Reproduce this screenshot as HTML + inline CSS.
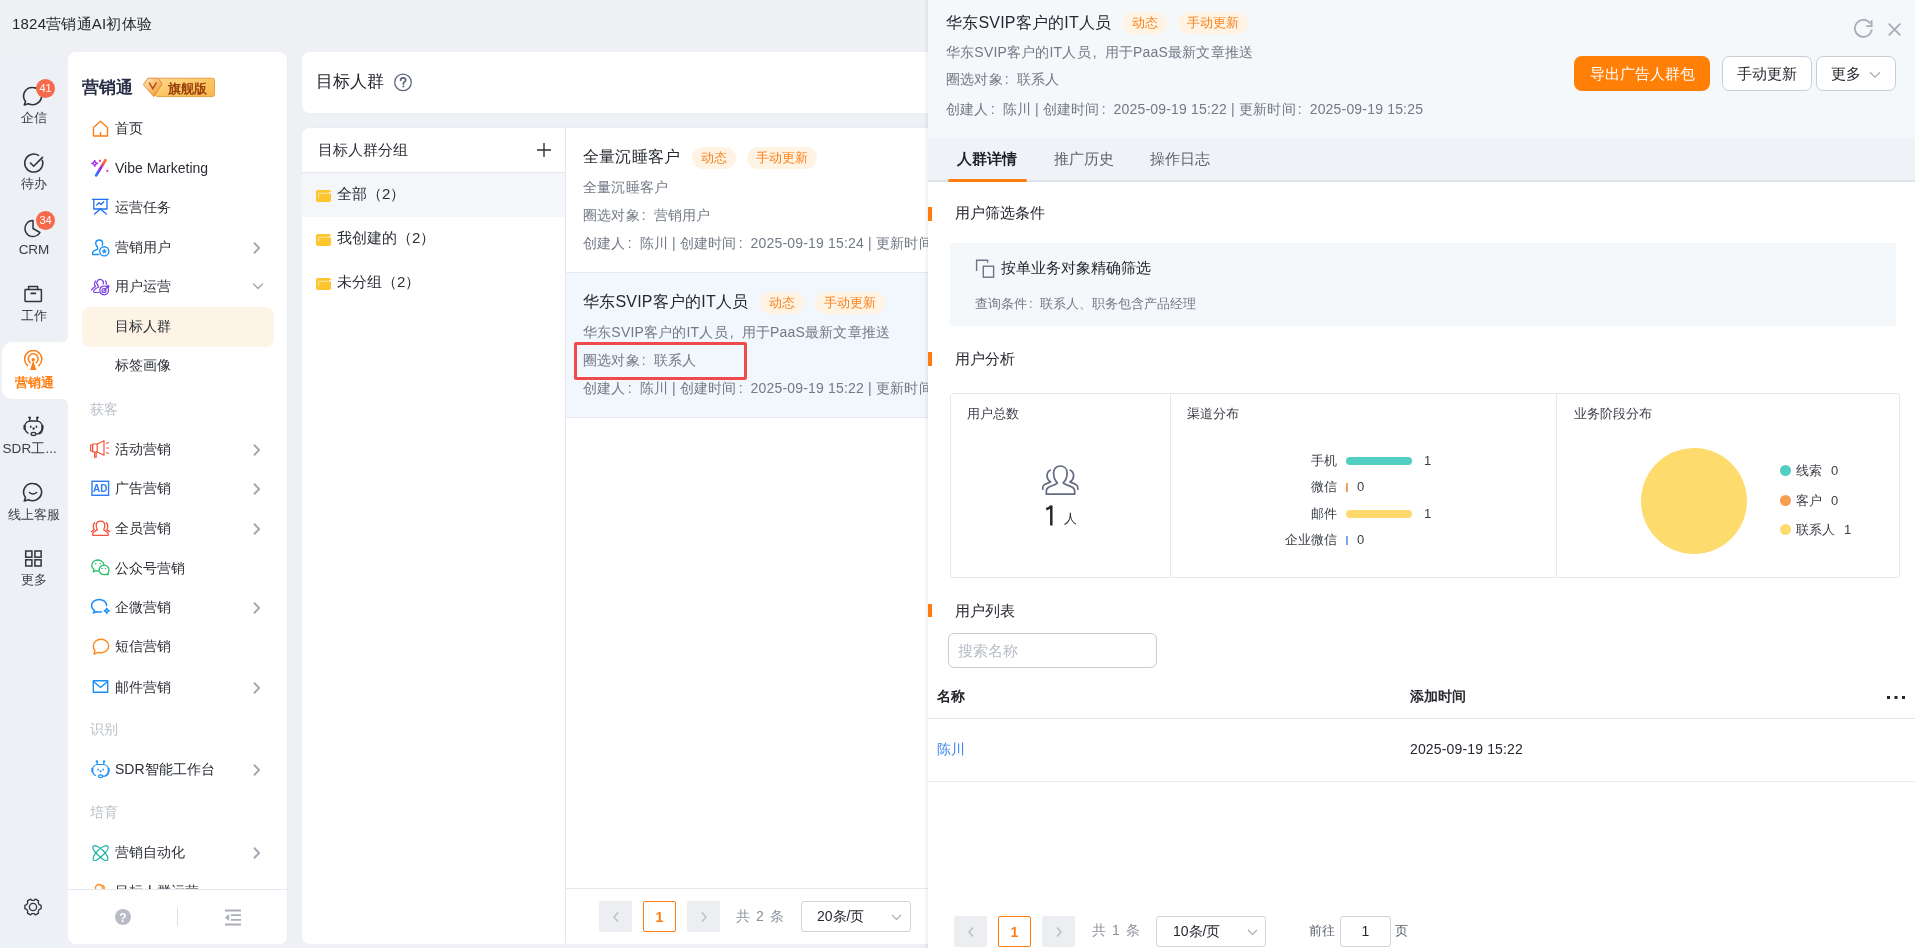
<!DOCTYPE html>
<html><head><meta charset="utf-8">
<style>
*{box-sizing:border-box;margin:0;padding:0}
html,body{width:1915px;height:948px;overflow:hidden}
body>*{will-change:transform}
body{background:#eff0f3;font-family:"Liberation Sans",sans-serif;color:#2b2f36;position:relative;font-size:14px}
.abs{position:absolute}
.topbar{left:12px;top:14px;font-size:15px;color:#25282e;line-height:20px}
.rail{left:0;top:52px;width:68px;height:896px;background:#edf0f4}
.ri{position:absolute;left:0;width:68px;text-align:center;font-size:13px;color:#3a3e46;line-height:14px}
.ri svg{position:absolute;left:24px}
.badge{position:absolute;width:19px;height:19px;border-radius:50%;background:#f6694b;color:#fff;font-size:11px;line-height:19px;text-align:center}
.menu{left:68px;top:52px;width:219px;height:892px;background:#fff;border-radius:8px;box-shadow:1px 0 0 #e6ecf8}
.mi{position:absolute;left:14px;width:192px;height:40px;font-size:14px;color:#2b2f36;line-height:40px;padding-left:33px}
.mi svg{position:absolute;left:10px;top:12px}
.mi .chev{position:absolute;left:170px;top:15px}
.grp{position:absolute;left:22px;font-size:14px;color:#bcc0c8;line-height:16px}
.card{background:#fff;border-radius:8px}
.tag{display:inline-block;height:22px;line-height:22px;padding:0 9px;border-radius:11px;background:#fff4e3;color:#f7821f;font-size:13px;vertical-align:top;position:relative;top:1px}
.gray{color:#6f7580}
.fold{width:15px;height:12px}
.grow{font-size:15px;line-height:22px;color:#2b2f36}
.ct{font-size:16px;line-height:22px;color:#25282e;white-space:nowrap;letter-spacing:.2px}
.ct .tag{letter-spacing:0}
.cl{font-size:14px;line-height:22px;color:#737985;letter-spacing:.18px}
.pbtn{width:33px;height:31px;background:#eceef2;border-radius:2px;display:flex;align-items:center;justify-content:center}
.obtn{height:35px;border:1px solid #c9cdd6;border-radius:7px;background:#fff;font-size:15px;line-height:33px;text-align:center;color:#25282e}
.sec{font-size:15px;line-height:22px;color:#25282e}
.sm{font-size:13px;line-height:20px;color:#3a3e46}
.chl{right:578px;font-size:13px;line-height:20px;color:#3a3e46;text-align:right}
.chv{font-size:13px;line-height:20px;color:#3a3e46}
.dot{left:852px;width:11px;height:11px;border-radius:50%}
.fp{display:inline-block;width:1em;text-indent:.15em}
</style></head><body>
<div class="abs topbar" style="letter-spacing:.2px">1824营销通AI初体验</div>

<!-- rail -->
<div class="abs rail"></div>
<div class="abs" style="left:0;top:0;width:68px;height:948px">
<!-- active bg -->
<div class="abs" style="left:2px;top:342px;width:66px;height:57px;background:#fff;border-radius:10px 0 0 10px"></div>
<div class="abs" style="left:62px;top:336px;width:6px;height:6px;background:#fff"></div>
<div class="abs" style="left:62px;top:336px;width:6px;height:6px;background:#edf0f4;border-radius:0 0 6px 0"></div>
<div class="abs" style="left:62px;top:399px;width:6px;height:6px;background:#fff"></div>
<div class="abs" style="left:62px;top:399px;width:6px;height:6px;background:#edf0f4;border-radius:0 6px 0 0"></div>

<svg class="abs" style="left:22px;top:86px" width="22" height="21" viewBox="0 0 22 21" fill="none" stroke="#30343c" stroke-width="1.6"><path d="M11 1.5a9 8.6 0 1 1-4.6 16.2L2.3 19l1.2-3.6A8.6 8.6 0 0 1 11 1.5z" stroke-linejoin="round"/></svg>
<div class="badge" style="left:36px;top:79px">41</div>
<div class="ri" style="top:111px">企信</div>

<svg class="abs" style="left:23.5px;top:152.5px" width="21" height="21" viewBox="0 0 21 21" fill="none" stroke="#30343c" stroke-width="1.6" stroke-linecap="round"><path d="M18.3 7.2A9 9 0 1 1 14.5 2.4"/><path d="M6.5 10l3.2 3.2L18.5 4.4"/></svg>
<div class="ri" style="top:177px">待办</div>

<svg class="abs" style="left:23px;top:218px" width="21" height="21" viewBox="0 0 21 21" fill="none" stroke="#30343c" stroke-width="1.5" stroke-linejoin="round"><path d="M10 2.5V10.5L16.93 14.5A8 8 0 1 1 10 2.5z"/></svg>
<div class="badge" style="left:36px;top:211px">34</div>
<div class="ri" style="top:243px;font-size:13.5px">CRM</div>

<svg class="abs" style="left:23px;top:284px" width="21" height="20" viewBox="0 0 21 20" fill="none" stroke="#30343c" stroke-width="1.5" stroke-linejoin="round" stroke-linecap="round"><rect x="2" y="5.6" width="16.4" height="11.8" rx=".6"/><path d="M5.6 5.6V2.4h9v3.2"/><path d="M8.2 9.4h4.2" stroke-width="1.7"/></svg>
<div class="ri" style="top:309px">工作</div>

<svg class="abs" style="left:23px;top:350px" width="21" height="21" viewBox="0 0 21 21" fill="none" stroke="#ff7d10" stroke-width="1.5" stroke-linecap="round"><path d="M4.6 15.6A8.6 8.6 0 1 1 15.8 15.6"/><path d="M7.2 12.6A4.9 4.9 0 1 1 13.2 12.6"/><circle cx="10.2" cy="9.8" r="1.7" fill="#ff7d10" stroke="none"/><path d="M10.2 10.5L7.1 20h6.2z" fill="#ff7d10" stroke="none"/></svg>
<div class="ri" style="top:376px;color:#ff7d10;font-weight:bold">营销通</div>

<svg class="abs" style="left:22px;top:416px" width="23" height="21" viewBox="0 0 21 19" fill="none" stroke="#30343c" stroke-width="1.25" stroke-linecap="round" stroke-linejoin="round"><path d="M5.5 15.5C3.5 14.5 2.5 12.5 2.5 10 2.5 6.5 5 4.5 8 4.5h5c3 0 5.5 2 5.5 5.5 0 2.5-1 4.5-3 5.5"/><path d="M7.2 4.5L7 1.5M13.8 4.5L14 1.5"/><path d="M6.2 1.2L7.3 .9 7.4 2.2z" fill="#30343c"/><path d="M14.8 1.2L13.7 .9 13.6 2.2z" fill="#30343c"/><path d="M2.3 8.8v2.8M18.7 8.8v2.8" stroke-width="2"/><path d="M8 9.3v.8M13.2 9.3v.8" stroke-width="1.4"/><circle cx="10.6" cy="11.3" r=".45" fill="#30343c"/><path d="M18.5 12.5q-.5 3.5-3.5 3.7h-2.5"/><ellipse cx="10.5" cy="16.3" rx="2.1" ry="1.4"/></svg>
<div class="ri" style="top:442px;font-size:13.5px;letter-spacing:0.1px;text-align:left;left:2.5px;width:auto;white-space:nowrap">SDR工...</div>

<svg class="abs" style="left:22px;top:482px" width="22" height="21" viewBox="0 0 22 21" fill="none" stroke="#30343c" stroke-width="1.6"><path d="M11 1.5a9 8.6 0 1 1-4.6 16.2L2.3 19l1.2-3.6A8.6 8.6 0 0 1 11 1.5z" stroke-linejoin="round"/><path d="M7.5 10.5q3.5 3 7 0" stroke-linecap="round"/></svg>
<div class="ri" style="top:508px">线上客服</div>

<svg class="abs" style="left:24px;top:549px" width="19" height="19" viewBox="0 0 19 19" fill="none" stroke="#30343c" stroke-width="1.5"><rect x="1.7" y="2" width="6.2" height="6.2"/><rect x="10.9" y="2" width="6.2" height="6.2"/><rect x="1.7" y="10.8" width="6.2" height="6.2"/><rect x="10.9" y="10.8" width="6.2" height="6.2"/></svg>
<div class="ri" style="top:573px">更多</div>

<svg class="abs" style="left:24px;top:898px" width="18" height="18" viewBox="0 0 18 18" fill="none" stroke="#30343c" stroke-width="1.3" stroke-linejoin="round"><path d="M15.25 6.60 L17.12 7.27 L17.12 10.73 L15.25 11.40 L14.21 13.22 L14.55 15.17 L11.56 16.89 L10.05 15.62 L7.95 15.62 L6.44 16.89 L3.45 15.17 L3.79 13.22 L2.75 11.40 L0.88 10.73 L0.88 7.27 L2.75 6.60 L3.79 4.78 L3.45 2.83 L6.44 1.11 L7.95 2.38 L10.05 2.38 L11.56 1.11 L14.55 2.83 L14.21 4.78Z"/><circle cx="9" cy="9" r="3.6"/></svg>
</div>

<!-- menu -->
<div class="abs menu"></div>
<div class="abs" style="left:68px;top:52px;width:219px;height:892px;overflow:hidden;border-radius:8px">
<div class="abs" style="left:14px;top:26px;font-size:17px;font-weight:bold;color:#283049;line-height:20px">营销通</div>
<svg class="abs" style="left:74px;top:25px" width="73" height="21" viewBox="0 0 73 21"><defs><linearGradient id="bg1" x1="0" y1="0" x2="1" y2="1"><stop offset="0" stop-color="#fed889"/><stop offset="1" stop-color="#f9b547"/></linearGradient><linearGradient id="gm" x1="0" y1="0" x2="1" y2="1"><stop offset="0" stop-color="#fde4b8"/><stop offset=".45" stop-color="#fbc47a"/><stop offset="1" stop-color="#f58a1f"/></linearGradient></defs><rect x="13.5" y="1.2" width="59" height="18.4" rx="2" fill="url(#bg1)" stroke="#e69a3c" stroke-width=".9"/><path d="M6 1.2h10l4.2 5.6-8.4 12.8L1.3 7.6z" fill="url(#gm)" stroke="#dc8530" stroke-width=".9" stroke-linejoin="round"/><path d="M7.2 5.6l3.6 6 3.8-6.2" fill="none" stroke="#b4561b" stroke-width="1.6"/><text x="45" y="15.6" text-anchor="middle" font-size="12.5" font-weight="bold" fill="#9a400c" font-family="Liberation Sans,sans-serif">旗舰版</text></svg>
<div class="mi" style="top:56px"><svg width="17" height="17" viewBox="0 0 17 17" fill="none" stroke="#ff7d10" stroke-width="1.4" stroke-linejoin="round"><path d="M1.5 16V7.5L8.5 1.2l7 6.3V16z"/><path d="M8.5 12v4"/></svg>首页</div>
<div class="mi" style="top:96px"><svg style="left:8px;top:10px" width="20" height="20" viewBox="0 0 20 20" fill="none"><defs><linearGradient id="vg" x1="0" y1="1" x2="0.6" y2="0"><stop offset="0" stop-color="#1a84f7"/><stop offset=".55" stop-color="#9b22f2"/><stop offset="1" stop-color="#ff6a3d"/></linearGradient></defs><path d="M6.2 17.4L15.4 2.2" stroke="url(#vg)" stroke-width="2.8" stroke-linecap="round"/><path d="M4.7 2.4Q5.1 5 7.7 5.4 5.1 5.8 4.7 8.4 4.3 5.8 1.7 5.4 4.3 5 4.7 2.4z" stroke="#a532ea" stroke-width="1.3" stroke-linejoin="round"/><rect x="9" y="1.8" width="2" height="2" fill="#e6409a"/><rect x="16.3" y="11.8" width="2" height="2" fill="#d23cc0"/></svg>Vibe Marketing</div>
<div class="mi" style="top:135px"><svg style="left:10px;top:11px" width="18" height="18" viewBox="0 0 18 18" fill="none" stroke="#1f6ff2" stroke-width="1.3" stroke-linecap="round" stroke-linejoin="round"><path d="M.6 1.3h15.5"/><path d="M1.8 1.3v9.7h13.2V1.3"/><path d="M4.8 7l2.2-2.2 2 1.6 2.8-2.6"/><path d="M8.4 11L2.6 16M8.4 11l6 5"/></svg>运营任务</div>
<div class="mi" style="top:175px"><svg style="left:10px;top:12px" width="18" height="18" viewBox="0 0 18 18" fill="none" stroke="#1d8ff5" stroke-width="1.4" stroke-linecap="round" stroke-linejoin="round"><path d="M5.1 7.6C4 6.5 3.7 5.3 3.7 4.3 3.7 2.3 5.3 1 7.4 1S10.6 2.5 10.6 4.4C10.6 5.2 10.5 5.8 10.3 6.4"/><path d="M5.1 7.6C5.7 8.3 5.8 9.5 5.5 10.3 3 11 .8 12 .6 14V15.5H6.8"/><circle cx="12.3" cy="12.3" r="4.6"/><path d="M12.30 10.10 L12.89 11.59 L14.49 11.69 L13.25 12.71 L13.65 14.26 L12.30 13.40 L10.95 14.26 L11.35 12.71 L10.11 11.69 L11.71 11.59Z" fill="#1d8ff5" stroke-width=".6"/></svg>营销用户<svg class="chev" width="10" height="12" viewBox="0 0 10 12" fill="none" stroke="#a6aab3" stroke-width="2" stroke-linecap="round" stroke-linejoin="round"><path d="M2.5 1.2l4.6 4.8-4.6 4.8"/></svg></div>
<div class="mi" style="top:214px"><svg style="left:8px;top:11px" width="20" height="20" viewBox="0 0 20 20" fill="none" stroke="#7a3fe0" stroke-width="1.2" stroke-linecap="round" stroke-linejoin="round"><path d="M7.6 7.8A3.3 3.3 0 1 1 13.2 7"/><path d="M7.6 7.8Q8.3 9.5 8.8 10 5 11.5 3.8 13.5 3.3 15.3 5 15.5H8.7"/><path d="M5.5 4Q3.6 6.5 5.5 9.5 3 10.8 1.5 13"/><path d="M15.5 4Q16.8 5.5 16.3 7.5"/><path d="M16.3 9.6A4.4 4.4 0 1 0 18.3 12"/><circle cx="14" cy="13.5" r="2"/><path d="M14 13.5L17.3 10.2"/><path d="M16.2 9.4L18.9 8.7 18.2 11.4z" fill="#7a3fe0"/></svg>用户运营<svg class="chev" width="12" height="10" viewBox="0 0 12 10" fill="none" stroke="#a9adb6" stroke-width="1.6" stroke-linecap="round" stroke-linejoin="round"><path d="M1.5 3l4.5 4.5L10.5 3"/></svg></div>
<div class="mi" style="top:377px"><svg style="left:8px;top:11px" width="21" height="19" viewBox="0 0 21 19" fill="none" stroke="#f4523b" stroke-width="1.2" stroke-linejoin="round" stroke-linecap="round"><path d="M.6 5h2v6h-2z"/><path d="M2.6 4h4.6v8H2.6z"/><path d="M7.2 4L14 .8v14.4L7.2 12"/><path d="M4.6 12v5.2h1.6V12"/><path d="M16.6 3.4l1.6-.9M16.8 8h1.8M16.6 12.6l1.6.9"/></svg>活动营销<svg class="chev" width="10" height="12" viewBox="0 0 10 12" fill="none" stroke="#a6aab3" stroke-width="2" stroke-linecap="round" stroke-linejoin="round"><path d="M2.5 1.2l4.6 4.8-4.6 4.8"/></svg></div>
<div class="mi" style="top:416px"><svg style="left:9px;top:12px" width="19" height="17" viewBox="0 0 19 17" fill="none"><rect x="1" y="1.3" width="16.6" height="14" stroke="#2e7cf6" stroke-width="1.4"/><text x="9.3" y="12.3" text-anchor="middle" font-family="Liberation Sans" font-size="10" font-weight="bold" fill="#2e7cf6">AD</text></svg>广告营销<svg class="chev" width="10" height="12" viewBox="0 0 10 12" fill="none" stroke="#a6aab3" stroke-width="2" stroke-linecap="round" stroke-linejoin="round"><path d="M2.5 1.2l4.6 4.8-4.6 4.8"/></svg></div>
<div class="mi" style="top:456px"><svg style="left:8px;top:11px" width="21" height="19" viewBox="0 0 21 19" fill="none" stroke="#f4523b" stroke-width="1.3" stroke-linejoin="round" stroke-linecap="round"><path d="M7.4 10.6Q6.2 9.2 6.2 6.6 6.2 2.2 10.5 2.2 14.8 2.2 14.8 6.6 14.8 9.2 13.6 10.6L17.4 13.2Q18.2 13.8 18.2 14.8V16.3H2.8V14.8Q2.8 13.8 3.6 13.2z"/><path d="M4.8 3.8Q2.8 5.5 3.4 8.8 3.7 10 4.2 10.7L1.4 12.6"/><path d="M16.2 3.8Q18.2 5.5 17.6 8.8 17.3 10 16.8 10.7L19.6 12.6"/></svg>全员营销<svg class="chev" width="10" height="12" viewBox="0 0 10 12" fill="none" stroke="#a6aab3" stroke-width="2" stroke-linecap="round" stroke-linejoin="round"><path d="M2.5 1.2l4.6 4.8-4.6 4.8"/></svg></div>
<div class="mi" style="top:496px"><svg style="left:8px;top:11px" width="21" height="18" viewBox="0 0 21 18" fill="none" stroke="#27c06a" stroke-width="1.3" stroke-linejoin="round"><path d="M3.8 10.3C2.4 9.3 1.8 8 1.8 6.6 1.8 3.5 4.5 1 7.9 1S14 3.5 14 6.6 11.3 12.2 7.9 12.2C7 12.2 6.1 12 5.3 11.7L3.4 12.9z"/><circle cx="5.7" cy="4.8" r=".8" fill="#27c06a" stroke="none"/><circle cx="10.3" cy="4.8" r=".8" fill="#27c06a" stroke="none"/><path d="M18.3 13.4C18.8 12.7 19 11.8 19 10.9 19 8.2 16.8 6.1 14.1 6.1S9.1 8.2 9.1 10.9 11.4 15.7 14.1 15.7C15 15.7 15.9 15.5 16.6 15.1L18.1 15.8z" fill="#fff"/><circle cx="11.8" cy="9.6" r=".75" fill="#27c06a" stroke="none"/><circle cx="15.6" cy="9.6" r=".75" fill="#27c06a" stroke="none"/></svg>公众号营销</div>
<div class="mi" style="top:535px"><svg style="left:8px;top:11px" width="22" height="19" viewBox="0 0 22 19" fill="none" stroke="#1d8ff5" stroke-width="1.5" stroke-linecap="round" stroke-linejoin="round"><path d="M16.6 7.6C16.6 3.9 13.2 1.4 9.2 1.4 5 1.4 1.6 4 1.6 7.6c0 2.1 1.1 3.9 2.9 5L3.4 15l3-1.3c.9.3 1.8.4 2.8.4.8 0 1.5-.1 2.2-.3"/><path d="M16.7 10.3l.8 1.6 1.7.9-1.7.9-.8 1.7-.8-1.7-1.7-.9 1.7-.9z"/></svg>企微营销<svg class="chev" width="10" height="12" viewBox="0 0 10 12" fill="none" stroke="#a6aab3" stroke-width="2" stroke-linecap="round" stroke-linejoin="round"><path d="M2.5 1.2l4.6 4.8-4.6 4.8"/></svg></div>
<div class="mi" style="top:574px"><svg width="18" height="17" viewBox="0 0 18 17" fill="none" stroke="#ff8a1f" stroke-width="1.4" stroke-linejoin="round"><path d="M9 1.2c4.3 0 7.7 3 7.7 6.8s-3.4 6.8-7.7 6.8c-1 0-2-.2-2.9-.5L2 16l.9-3.5C1.9 11.3 1.3 9.7 1.3 8 1.3 4.2 4.7 1.2 9 1.2z"/></svg>短信营销</div>
<div class="mi" style="top:615px"><svg style="left:10px;top:10.5px" width="17" height="17" viewBox="0 0 17 17" fill="none" stroke="#1d8ff5" stroke-width="1.4" stroke-linejoin="round"><rect x="1.3" y="2.8" width="14.4" height="11.4"/><path d="M1.5 3.5l7 6 7-6"/></svg>邮件营销<svg class="chev" width="10" height="12" viewBox="0 0 10 12" fill="none" stroke="#a6aab3" stroke-width="2" stroke-linecap="round" stroke-linejoin="round"><path d="M2.5 1.2l4.6 4.8-4.6 4.8"/></svg></div>
<div class="mi" style="top:697px"><svg style="left:8px;top:11px" width="21" height="19" viewBox="0 0 21 19" fill="none" stroke="#1d8ff5" stroke-width="1.2" stroke-linecap="round" stroke-linejoin="round"><path d="M5.5 15.5C3.5 14.5 2.5 12.5 2.5 10 2.5 6.5 5 4.5 8 4.5h5c3 0 5.5 2 5.5 5.5 0 2.5-1 4.5-3 5.5"/><path d="M7.2 4.5L7 1.5M13.8 4.5L14 1.5"/><path d="M6.2 1.2L7.3 .9 7.4 2.2z" fill="#1d8ff5"/><path d="M14.8 1.2L13.7 .9 13.6 2.2z" fill="#1d8ff5"/><path d="M2.3 8.8v2.8M18.7 8.8v2.8" stroke-width="2"/><path d="M8 9.3v.8M13.2 9.3v.8" stroke-width="1.4"/><circle cx="10.6" cy="11.3" r=".45" fill="#1d8ff5"/><path d="M18.5 12.5q-.5 3.5-3.5 3.7h-2.5"/><ellipse cx="10.5" cy="16.3" rx="2.1" ry="1.4"/></svg>SDR智能工作台<svg class="chev" width="10" height="12" viewBox="0 0 10 12" fill="none" stroke="#a6aab3" stroke-width="2" stroke-linecap="round" stroke-linejoin="round"><path d="M2.5 1.2l4.6 4.8-4.6 4.8"/></svg></div>
<div class="mi" style="top:780px"><svg width="17" height="17" viewBox="0 0 17 17" fill="none" stroke="#20b4a8" stroke-width="1.25"><path d="M2.3 2.3C4 .6 8.6 3 12.1 6.5s5.9 8.1 4.2 9.8S10 14 6.5 10.5.6 4 2.3 2.3z" transform="translate(-1 0)"/><path d="M14.7 2.3C13 .6 8.4 3 4.9 6.5S-1 14.6.7 16.3 7 14 10.5 10.5 16.4 4 14.7 2.3z" transform="translate(1 0)"/></svg>营销自动化<svg class="chev" width="10" height="12" viewBox="0 0 10 12" fill="none" stroke="#a6aab3" stroke-width="2" stroke-linecap="round" stroke-linejoin="round"><path d="M2.5 1.2l4.6 4.8-4.6 4.8"/></svg></div>
<div class="mi" style="top:819px"><svg width="18" height="17" viewBox="0 0 18 17" fill="none" stroke="#ff8a1f" stroke-width="1.4" stroke-linecap="round"><circle cx="7" cy="5" r="3.5"/><path d="M1.5 15q0-5 5.5-5.5"/><path d="M11.2 2.5q1.3 1.2 1 3"/></svg>目标人群运营</div>
<div class="abs" style="left:14px;top:255px;width:192px;height:40px;border-radius:8px;background:#fdf4e5"></div>
<div class="mi" style="top:254px">目标人群</div>
<div class="mi" style="top:293px">标签画像</div>
<div class="grp" style="top:349px">获客</div>
<div class="grp" style="top:669px">识别</div>
<div class="grp" style="top:752px">培育</div>
<div class="abs" style="left:0;top:837px;width:219px;height:55px;background:#fff;border-top:1px solid #e6e9f0"></div>
<svg class="abs" style="left:47px;top:857px" width="16" height="16" viewBox="0 0 16 16"><circle cx="8" cy="8" r="8" fill="#b9bcc6"/><text x="8" y="12.5" text-anchor="middle" font-size="12" font-weight="bold" fill="#fff" font-family="Liberation Sans">?</text></svg>
<div class="abs" style="left:109px;top:856px;width:1px;height:18px;background:#dcdfe5"></div>
<svg class="abs" style="left:156px;top:857px" width="18" height="17" viewBox="0 0 18 17" fill="none" stroke="#a9adb6" stroke-width="1.8"><path d="M1 1.5h16M7 6.2h10M7 10.8h10M1 15.5h16"/><path d="M5.2 5L1 8.5 5.2 12z" fill="#a9adb6" stroke="none"/></svg>
</div>


<!-- header card -->
<div class="abs card" style="left:302px;top:52px;width:640px;height:61px"></div>
<div class="abs" style="left:316px;top:71px;font-size:17px;line-height:22px;color:#25282e">目标人群</div>
<svg class="abs" style="left:394px;top:73px" width="19" height="19" viewBox="0 0 19 19" fill="none"><circle cx="9" cy="9.4" r="8.3" stroke="#5d6379" stroke-width="1.25"/><path d="M6.6 7.2q0-2.4 2.6-2.4 2.5 0 2.5 2.1 0 1.3-1.4 2.1-.9.5-.9 1.6v.5" stroke="#5d6379" stroke-width="1.7" stroke-linecap="round"/><circle cx="9.4" cy="13.6" r="1" fill="#5d6379"/></svg>
<!-- content card -->
<div class="abs" style="left:302px;top:128px;width:640px;height:816px;border-radius:8px;box-shadow:0 -1px 0 #e6ecf8"></div>
<div class="abs card" style="left:302px;top:128px;width:640px;height:816px;overflow:hidden">
  <div class="abs" style="left:263px;top:0;width:1px;height:815px;background:#e4e7ee"></div>
  <div class="abs" style="left:0;top:44px;width:263px;height:1px;background:#e4e7ee"></div>
  <div class="abs" style="left:16px;top:11px;font-size:15px;line-height:22px;color:#2b2f36">目标人群分组</div>
  <svg class="abs" style="left:234px;top:14px" width="16" height="16" viewBox="0 0 16 16" stroke="#2b2f36" stroke-width="1.4"><path d="M8 1v14M1 8h14"/></svg>
  <div class="abs" style="left:0;top:45px;width:263px;height:44px;background:#f5f6fa"></div>
  <div class="abs fold" style="left:14px;top:61px"><svg width="15" height="12" viewBox="0 0 15 12"><rect x="0" y="0" width="15" height="12" rx="2" fill="#fdc62e"/><path d="M2.6 8.2V3.3H14.2" fill="none" stroke="#fbe7a8" stroke-width="1"/><path d="M14.2 3.3V2" stroke="#f4f6fa" stroke-width="1.6"/></svg></div>
  <div class="abs grow" style="left:35px;top:55px">全部（2）</div>
  <div class="abs fold" style="left:14px;top:105px"><svg width="15" height="12" viewBox="0 0 15 12"><rect x="0" y="0" width="15" height="12" rx="2" fill="#fdc62e"/><path d="M2.6 8.2V3.3H14.2" fill="none" stroke="#fbe7a8" stroke-width="1"/><path d="M14.2 3.3V2" stroke="#ffffff" stroke-width="1.6"/></svg></div>
  <div class="abs grow" style="left:35px;top:99px">我创建的（2）</div>
  <div class="abs fold" style="left:14px;top:149px"><svg width="15" height="12" viewBox="0 0 15 12"><rect x="0" y="0" width="15" height="12" rx="2" fill="#fdc62e"/><path d="M2.6 8.2V3.3H14.2" fill="none" stroke="#fbe7a8" stroke-width="1"/><path d="M14.2 3.3V2" stroke="#ffffff" stroke-width="1.6"/></svg></div>
  <div class="abs grow" style="left:35px;top:143px">未分组（2）</div>

  <div class="abs" style="left:264px;top:144px;width:376px;height:145px;background:#f2f6fd"></div>
  <div class="abs" style="left:264px;top:144px;width:376px;height:1px;background:#e6e9f0"></div>
  <div class="abs" style="left:264px;top:289px;width:376px;height:1px;background:#e6e9f0"></div>

  <div class="abs ct" style="left:281px;top:18px">全量沉睡客户<span class="tag" style="margin-left:12px">动态</span><span class="tag" style="margin-left:11px">手动更新</span></div>
  <div class="abs cl" style="left:281px;top:48px">全量沉睡客户</div>
  <div class="abs cl" style="left:281px;top:76px">圈选对象<span class="fp">:</span>营销用户</div>
  <div class="abs cl" style="left:281px;top:104px;white-space:nowrap">创建人<span class="fp">:</span>陈川 | 创建时间<span class="fp">:</span>2025-09-19 15:24 | 更新时间<span class="fp">:</span>2025-09-19 15:25</div>

  <div class="abs ct" style="left:281px;top:163px">华东SVIP客户的IT人员<span class="tag" style="margin-left:12px">动态</span><span class="tag" style="margin-left:11px">手动更新</span></div>
  <div class="abs cl" style="left:281px;top:193px">华东SVIP客户的IT人员<span class="fp">,</span>用于PaaS最新文章推送</div>
  <div class="abs cl" style="left:281px;top:221px">圈选对象<span class="fp">:</span>联系人</div>
  <div class="abs cl" style="left:281px;top:249px;white-space:nowrap">创建人<span class="fp">:</span>陈川 | 创建时间<span class="fp">:</span>2025-09-19 15:22 | 更新时间<span class="fp">:</span>2025-09-19 15:25</div>
  <div class="abs" style="left:272px;top:214px;width:173px;height:38px;border:3px solid #ef4b4b;border-radius:2px"></div>

  <div class="abs" style="left:264px;top:760px;width:376px;height:1px;background:#e6e9f0"></div>
  <div class="abs pbtn" style="left:297px;top:773px"><svg width="8" height="12" viewBox="0 0 8 12" fill="none" stroke="#b6bac3" stroke-width="1.3"><path d="M6 1.5L2 6l4 4.5"/></svg></div>
  <div class="abs" style="left:341px;top:773px;width:33px;height:31px;border:1px solid #ff7d10;border-radius:2px;color:#ff7d10;font-size:14px;font-weight:bold;line-height:30px;text-align:center">1</div>
  <div class="abs pbtn" style="left:385px;top:773px"><svg width="8" height="12" viewBox="0 0 8 12" fill="none" stroke="#b6bac3" stroke-width="1.3"><path d="M2 1.5L6 6l-4 4.5"/></svg></div>
  <div class="abs" style="left:434px;top:778px;font-size:14px;color:#8b919c;line-height:20px;letter-spacing:1px">共 2 条</div>
  <div class="abs" style="left:499px;top:773px;width:110px;height:31px;border:1px solid #cfd3dc;border-radius:3px;font-size:14px;line-height:29px;padding-left:15px;color:#25282e">20条/页<svg class="abs" style="left:89px;top:12px" width="11" height="7" viewBox="0 0 11 7" fill="none" stroke="#a9adb6" stroke-width="1.2"><path d="M1 1l4.5 4.5L10 1"/></svg></div>
</div>

<!-- drawer -->
<div class="abs" style="left:924px;top:0;width:4px;height:948px;background:linear-gradient(to right,rgba(0,0,0,0),rgba(0,0,0,0.06))"></div>
<div class="abs" style="left:928px;top:0;width:987px;height:948px;background:#fff;overflow:hidden">
  <div class="abs" style="left:0;top:0;width:987px;height:138px;background:#f5f8fb"></div>
  <div class="abs ct" style="left:18px;top:12px">华东SVIP客户的IT人员<span class="tag" style="margin-left:12px;top:0">动态</span><span class="tag" style="margin-left:11px;top:0">手动更新</span></div>
  <div class="abs cl" style="left:18px;top:41px">华东SVIP客户的IT人员<span class="fp">,</span>用于PaaS最新文章推送</div>
  <div class="abs cl" style="left:18px;top:68px">圈选对象<span class="fp">:</span>联系人</div>
  <div class="abs cl" style="left:18px;top:98px;white-space:nowrap">创建人<span class="fp">:</span>陈川 | 创建时间<span class="fp">:</span>2025-09-19 15:22 | 更新时间<span class="fp">:</span>2025-09-19 15:25</div>
  <svg class="abs" style="left:925px;top:19px" width="20" height="20" viewBox="0 0 20 20" fill="none" stroke="#a9acb5" stroke-width="1.8"><path d="M18.8 10.5A8.5 8.5 0 1 1 17.4 4.6"/><path d="M18.6 1.3V7.1H13.3" stroke-linejoin="miter"/></svg>
  <svg class="abs" style="left:959.5px;top:22.5px" width="13" height="13" viewBox="0 0 13 13" fill="none" stroke="#a9acb5" stroke-width="1.8" stroke-linecap="round"><path d="M1.2 1.2l10.6 10.6M11.8 1.2L1.2 11.8"/></svg>
  <div class="abs" style="left:646px;top:56px;width:136px;height:35px;background:#ff7f07;border-radius:8px;color:#fff;font-size:15px;line-height:35px;text-align:center">导出广告人群包</div>
  <div class="abs obtn" style="left:794px;top:56px;width:90px">手动更新</div>
  <div class="abs obtn" style="left:888px;top:56px;width:80px;text-align:left;padding-left:14px">更多<svg class="abs" style="left:52px;top:14px" width="12" height="8" viewBox="0 0 12 8" fill="none" stroke="#a9adb6" stroke-width="1.3"><path d="M1 1.2l5 5 5-5"/></svg></div>

  <div class="abs" style="left:0;top:138px;width:987px;height:42px;background:#eff2f6"></div>
  <div class="abs" style="left:0;top:180px;width:987px;height:2px;background:#dfe3ea"></div>
  <div class="abs" style="left:20px;top:178.5px;width:79px;height:3.5px;background:#ff7d10;border-radius:2px"></div>
  <div class="abs" style="left:29px;top:148px;font-size:15px;line-height:22px;font-weight:bold;color:#1f2228">人群详情</div>
  <div class="abs" style="left:126px;top:148px;font-size:15px;line-height:22px;color:#5f6570">推广历史</div>
  <div class="abs" style="left:222px;top:148px;font-size:15px;line-height:22px;color:#5f6570">操作日志</div>

  <div class="abs" style="left:0;top:207px;width:4px;height:14px;background:#ff7d10"></div>
  <div class="abs sec" style="left:27px;top:202px">用户筛选条件</div>
  <div class="abs" style="left:22px;top:243px;width:946px;height:83px;background:#f5f8fb"></div>
  <svg class="abs" style="left:47px;top:259px" width="20" height="20" viewBox="0 0 20 20" fill="none" stroke="#6f7487" stroke-width="1.4"><path d="M1.6 12V1.3H12.6V3.8"/><rect x="8.3" y="7.2" width="10.3" height="11"/></svg>
  <div class="abs" style="left:73px;top:257px;font-size:15px;line-height:22px;color:#25282e">按单业务对象精确筛选</div>
  <div class="abs" style="left:47px;top:294px;font-size:13px;line-height:20px;color:#737985">查询条件<span class="fp">:</span>联系人、职务包含产品经理</div>

  <div class="abs" style="left:0;top:352px;width:4px;height:14px;background:#ff7d10"></div>
  <div class="abs sec" style="left:27px;top:348px">用户分析</div>
  <div class="abs" style="left:22px;top:393px;width:950px;height:185px;border:1px solid #e6e9f0;border-radius:3px"></div>
  <div class="abs" style="left:242px;top:394px;width:1px;height:183px;background:#e6e9f0"></div>
  <div class="abs" style="left:628px;top:394px;width:1px;height:183px;background:#e6e9f0"></div>
  <div class="abs sm" style="left:39px;top:404px">用户总数</div>
  <svg class="abs" style="left:113px;top:465px" width="39" height="31" viewBox="0 0 39 31" fill="none" stroke="#656b80" stroke-width="1.7" stroke-linejoin="round" stroke-linecap="round"><path d="M16.5 17.8C13 15 12.6 11 12.6 8 12.6 3.5 15.5 1 19.3 1S26.1 3.5 26.1 8C26.1 11 25.6 15 22.1 17.8 22.6 19 28 20.5 31 22 33 23 33.7 25 33.7 26.5V29.2H5.3V26.5C5.3 25 6 23 8 22 11 20.5 16 19 16.5 17.8Z"/><path d="M9.3 5.2C6.5 6.5 6 9 6 11 6 13.5 7.5 15.5 9.6 17 7 18 4 19 2.5 20.5 1.8 21.3 1.7 23 1.7 24.2"/><path d="M29.3 5.2C32.1 6.5 32.6 9 32.6 11 32.6 13.5 31.1 15.5 29 17 31.6 18 34.6 19 36.1 20.5 36.8 21.3 36.9 23 36.9 24.2"/></svg>
  <svg class="abs" style="left:116px;top:503px" width="12" height="24" viewBox="0 0 12 24" fill="none" stroke="#25282e" stroke-width="2.5" stroke-linejoin="miter"><path d="M2.2 6.2Q6.5 4.8 7.3 2.6V22.6"/></svg>
  <div class="abs" style="left:136px;top:510px;font-size:13px;line-height:18px;color:#25282e">人</div>

  <div class="abs sm" style="left:259px;top:404px">渠道分布</div>
  <div class="abs chl" style="top:451px">手机</div><div class="abs" style="left:418px;top:457px;width:66px;height:8px;border-radius:4px;background:#52cdc1"></div><div class="abs chv" style="left:496px;top:451px">1</div>
  <div class="abs chl" style="top:477px">微信</div><div class="abs" style="left:418px;top:483px;width:2px;height:9px;background:#f5a05a"></div><div class="abs chv" style="left:429px;top:477px">0</div>
  <div class="abs chl" style="top:504px">邮件</div><div class="abs" style="left:418px;top:510px;width:66px;height:8px;border-radius:4px;background:#fcd96a"></div><div class="abs chv" style="left:496px;top:504px">1</div>
  <div class="abs chl" style="top:530px">企业微信</div><div class="abs" style="left:418px;top:536px;width:2px;height:9px;background:#7aa8f0"></div><div class="abs chv" style="left:429px;top:530px">0</div>

  <div class="abs sm" style="left:646px;top:404px">业务阶段分布</div>
  <div class="abs" style="left:713px;top:448px;width:106px;height:106px;border-radius:50%;background:#fddb6d"></div>
  <div class="abs dot" style="top:465px;background:#52cfc4"></div><div class="abs sm" style="left:868px;top:461px">线索</div><div class="abs sm" style="left:903px;top:461px">0</div>
  <div class="abs dot" style="top:495px;background:#f89c50"></div><div class="abs sm" style="left:868px;top:491px">客户</div><div class="abs sm" style="left:903px;top:491px">0</div>
  <div class="abs dot" style="top:524px;background:#fddb6d"></div><div class="abs sm" style="left:868px;top:520px">联系人</div><div class="abs sm" style="left:916px;top:520px">1</div>

  <div class="abs" style="left:0;top:604px;width:4px;height:13px;background:#ff7d10"></div>
  <div class="abs sec" style="left:27px;top:600px">用户列表</div>
  <div class="abs" style="left:20px;top:633px;width:209px;height:35px;border:1px solid #c9cdd6;border-radius:6px;font-size:15px;line-height:33px;padding-left:9px;color:#b9bdc6">搜索名称</div>
  <div class="abs" style="left:9px;top:686px;font-size:14px;line-height:20px;font-weight:bold;color:#25282e">名称</div>
  <div class="abs" style="left:482px;top:686px;font-size:14px;line-height:20px;font-weight:bold;color:#25282e">添加时间</div>
  <svg class="abs" style="left:958px;top:695px" width="20" height="5" viewBox="0 0 20 5" fill="#25282e"><rect x="1" y="1" width="3" height="3"/><rect x="8.5" y="1" width="3" height="3"/><rect x="16" y="1" width="3" height="3"/></svg>
  <div class="abs" style="left:0;top:718px;width:987px;height:1px;background:#e2e5ec"></div>
  <div class="abs" style="left:9px;top:739px;font-size:14px;line-height:20px;color:#3a84f0">陈川</div>
  <div class="abs" style="left:482px;top:739px;font-size:14px;line-height:20px;color:#25282e;letter-spacing:.15px">2025-09-19 15:22</div>
  <div class="abs" style="left:0;top:781px;width:987px;height:1px;background:#e8eaef"></div>

  <div class="abs pbtn" style="left:26px;top:916px"><svg width="8" height="12" viewBox="0 0 8 12" fill="none" stroke="#b6bac3" stroke-width="1.3"><path d="M6 1.5L2 6l4 4.5"/></svg></div>
  <div class="abs" style="left:70px;top:916px;width:33px;height:31px;border:1px solid #ff7d10;border-radius:2px;color:#ff7d10;font-size:14px;font-weight:bold;line-height:30px;text-align:center">1</div>
  <div class="abs pbtn" style="left:114px;top:916px"><svg width="8" height="12" viewBox="0 0 8 12" fill="none" stroke="#b6bac3" stroke-width="1.3"><path d="M2 1.5L6 6l-4 4.5"/></svg></div>
  <div class="abs" style="left:164px;top:920px;font-size:14px;color:#8b919c;line-height:20px;letter-spacing:1px">共 1 条</div>
  <div class="abs" style="left:228px;top:916px;width:110px;height:31px;border:1px solid #cfd3dc;border-radius:3px;font-size:14px;line-height:29px;padding-left:16px;color:#25282e">10条/页<svg class="abs" style="left:90px;top:12px" width="11" height="7" viewBox="0 0 11 7" fill="none" stroke="#a9adb6" stroke-width="1.2"><path d="M1 1l4.5 4.5L10 1"/></svg></div>
  <div class="abs" style="left:381px;top:921px;font-size:13px;line-height:20px;color:#5f6570">前往</div>
  <div class="abs" style="left:412px;top:916px;width:51px;height:31px;border:1px solid #cfd3dc;border-radius:3px;font-size:14px;line-height:29px;text-align:center;color:#25282e">1</div>
  <div class="abs" style="left:467px;top:921px;font-size:13px;line-height:20px;color:#5f6570">页</div>
</div>
</body></html>
